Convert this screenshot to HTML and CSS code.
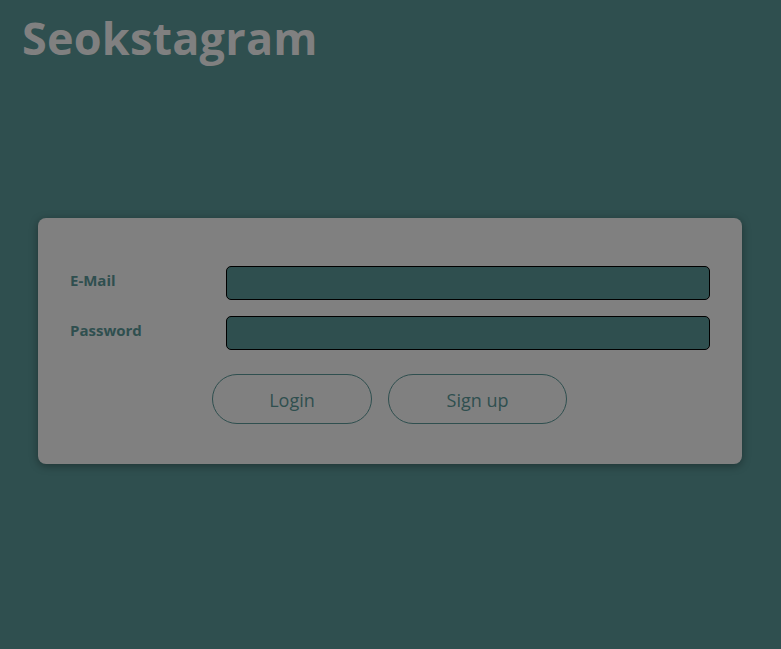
FILE: index.html
```html
<!DOCTYPE html>
<html>
<head>
<meta charset="utf-8">
<link rel="stylesheet" href="styles.css">
</head>
<body>
<h1 class="title">Seokstagram</h1>
<main class="wrap">
  <form class="card">
    <div class="row">
      <label class="label">E-Mail</label>
      <input class="field" type="text">
    </div>
    <div class="row">
      <label class="label">Password</label>
      <input class="field" type="password">
    </div>
    <div class="actions">
      <button type="button" class="btn btn-login">Login</button>
      <button type="button" class="btn btn-signup">Sign up</button>
    </div>
  </form>
</main>
</body>
</html>
```
FILE: styles.css
```css
html, body {
  margin: 0;
  padding: 0;
  background: #2f4f4f;
  height: 100%;
}
body {
  font-family: "Open Sans", "Noto Sans", sans-serif;
}
.title {
  margin: 0;
  padding: 8px 0 0 22px;
  font-size: 45px;
  line-height: 60px;
  font-weight: 700;
  color: #808080;
  letter-spacing: 0.2px;
}
.wrap {
  padding: 150px 39px 0 38px;
}
.card {
  background: #808080;
  border-radius: 8px;
  box-shadow: 0 2px 8px rgba(0,0,0,0.35);
  padding: 48px 32px 40px 32px;
  display: flex;
  flex-direction: column;
  gap: 16px;
}
.row {
  display: flex;
  align-items: flex-start;
}
.label {
  width: 156px;
  flex: none;
  font-size: 15px;
  font-weight: 700;
  color: #2f4f4f;
  line-height: 18px;
  padding-top: 5px;
}
.field {
  flex: 1;
  height: 34px;
  box-sizing: border-box;
  margin: 0;
  background: #2f4f4f;
  border: 1px solid #000;
  border-radius: 5px;
  outline: none;
}
.actions {
  display: flex;
  justify-content: center;
  gap: 16px;
  margin-top: 8px;
  padding-right: 1px;
}
.btn {
  height: 50px;
  box-sizing: border-box;
  background: transparent;
  border: 1px solid #2f4f4f;
  border-radius: 25px;
  color: #2f4f4f;
  font-family: "Open Sans", "Noto Sans", sans-serif;
  font-size: 18px;
  padding: 2px 0 0 0;
}
.btn-login { width: 160px; }
.btn-signup { width: 179px; }
```
